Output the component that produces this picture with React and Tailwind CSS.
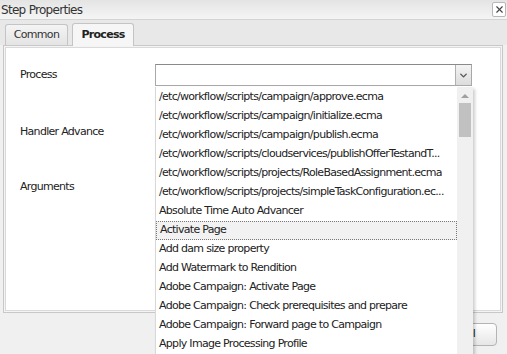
import { X, ChevronDown } from 'lucide-react'

const ITEMS = [
  '/etc/workflow/scripts/campaign/approve.ecma',
  '/etc/workflow/scripts/campaign/initialize.ecma',
  '/etc/workflow/scripts/campaign/publish.ecma',
  '/etc/workflow/scripts/cloudservices/publishOfferTestandT...',
  '/etc/workflow/scripts/projects/RoleBasedAssignment.ecma',
  '/etc/workflow/scripts/projects/simpleTaskConfiguration.ec...',
  'Absolute Time Auto Advancer',
  'Activate Page',
  'Add dam size property',
  'Add Watermark to Rendition',
  'Adobe Campaign: Activate Page',
  'Adobe Campaign: Check prerequisites and prepare',
  'Adobe Campaign: Forward page to Campaign',
  'Apply Image Processing Profile',
]

export default function App() {
  return (
    <div className="relative w-[507px] h-[354px] overflow-hidden bg-[#f0f0f0] text-[11px] tracking-[-0.7px] text-[#222] font-['DejaVu_Sans',sans-serif]">
      {/* Title bar */}
      <div className="flex items-center justify-between h-[20px] bg-gradient-to-b from-[#e4e4e4] to-[#f5f5f5] border-b border-[#d4d4d4]">
        <span className="pl-[1px] text-[12px] text-[#333]">Step Properties</span>
        <button className="mr-[1px] flex items-center justify-center w-[14px] h-[15px] border border-[#b8b8b8] rounded-[2px] bg-white">
          <X size={11} strokeWidth={2.5} className="text-[#444]" />
        </button>
      </div>

      {/* Tab strip */}
      <div className="flex items-end gap-[4px] h-[25px] bg-[#e8e8e8] pl-[5px]">
        <div className="flex items-center justify-center w-[63px] h-[21px] border border-b-0 border-[#c4c4c4] rounded-t-[3px] bg-gradient-to-b from-[#f4f4f4] to-[#e4e4e4] text-[#333]">
          Common
        </div>
        <div className="flex items-center justify-center w-[62px] h-[23px] mb-[-1px] border border-b-0 border-[#c4c4c4] rounded-t-[3px] bg-[#f6f6f6] font-bold text-[#222]">
          Process
        </div>
      </div>

      {/* Panel */}
      <div className="mx-[3px] w-[500px] h-[268px] border border-[#c8c8c8] bg-[#f4f4f4] p-[1px]">
        <div className="h-full bg-white border border-[#dadada] pl-[14px] pt-[16px] flex flex-col">
          <div className="flex items-center h-[22px]">
            <span className="w-[135px]">Process</span>
            <div className="flex w-[317px] h-[22px] border border-[#a8a8a8] border-t-[#8a8a8a] bg-white">
              <div className="flex-1" />
              <div className="flex items-center justify-center w-[16px] bg-gradient-to-b from-[#f4f4f4] to-[#dcdcdc] border-l border-[#b0b0b0]">
                <ChevronDown size={11} strokeWidth={3} className="text-[#555]" />
              </div>
            </div>
          </div>
          <div className="mt-[35px] h-[22px] flex items-center">Handler Advance</div>
          <div className="mt-[33px] h-[22px] flex items-center">Arguments</div>
        </div>
      </div>

      {/* Footer */}
      <div className="flex justify-end pr-[10px] pt-[10px]">
        <button className="w-[77px] h-[23px] border border-[#b4b4b4] rounded-[4px] bg-gradient-to-b from-white to-[#e6e6e6] text-[#222]">
          Cancel
        </button>
      </div>

      {/* Open dropdown list */}
      <div className="absolute left-[155px] top-[87px] w-[318px] h-[280px] flex bg-white border-l border-[#d8d8d8] shadow-[2px_2px_3px_rgba(0,0,0,0.2)]">
        <div className="flex-1 min-w-0 overflow-hidden flex flex-col pt-[1px]">
          {ITEMS.map(item => (
            <div
              key={item}
              className={`h-[19px] shrink-0 flex items-center pl-[3px] whitespace-nowrap ${
                item === 'Activate Page' ? 'border border-dotted border-[#777] bg-[#f2f2f2] pl-[2px]' : ''
              }`}
            >
              {item}
            </div>
          ))}
        </div>
        <div className="w-[16px] shrink-0 bg-[#f0f0f0] flex flex-col items-center pt-[7px]">
          <div className="w-0 h-0 border-l-[4px] border-r-[4px] border-b-[4px] border-l-transparent border-r-transparent border-b-[#a0a0a0]" />
          <div className="mt-[5px] w-[12px] h-[34px] bg-[#c1c1c1]" />
        </div>
      </div>
    </div>
  )
}
